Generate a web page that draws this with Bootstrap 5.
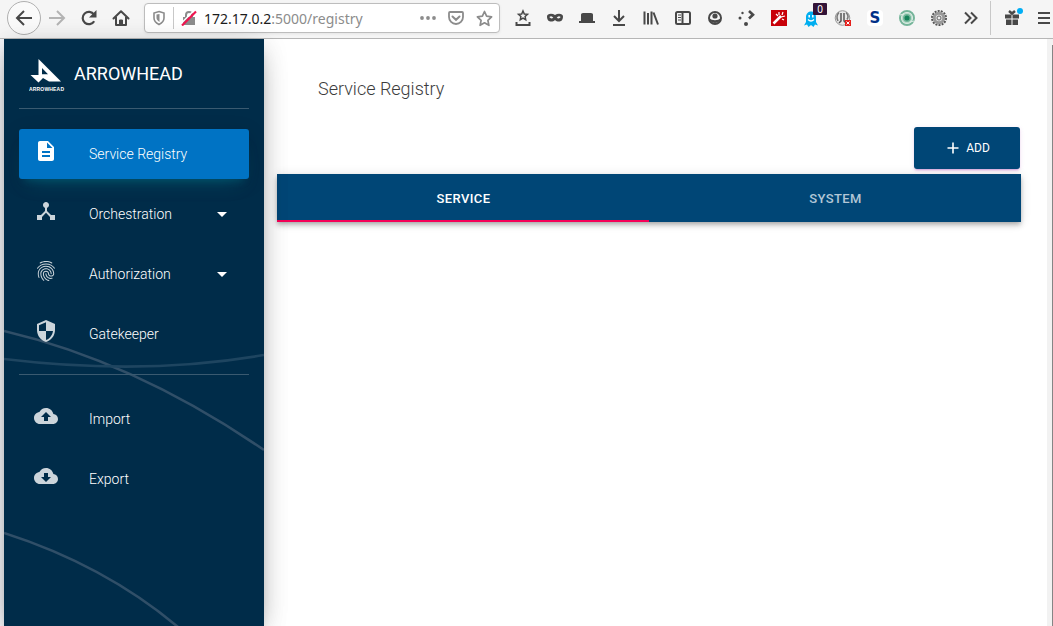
<!DOCTYPE html>
<html lang="en">
<head>
<meta charset="utf-8">
<meta name="viewport" content="width=device-width, initial-scale=1">
<title>Service Registry</title>
<link href="https://cdn.jsdelivr.net/npm/bootstrap@5.3.0/dist/css/bootstrap.min.css" rel="stylesheet">
<style>
  body { height: 626px; font-family: Roboto, sans-serif; background: #fff; }
  .browser-bar { height: 39px; background: #f5f5f5; border-bottom: 1px solid #b6b6b6; padding: 0 0 2px 8px; color: #484848; }
  .tool { width: 32px; height: 34px; flex: none; display: flex; align-items: center; justify-content: center; position: relative; }
  .tool svg, .address svg { display: block; fill: none; stroke: currentColor; stroke-width: 2; flex: none; }
  .back-ring { width: 34px; height: 34px; margin: 0 -1px; border: 1px solid #b0b0b0; border-radius: 50%; background: #fafafa; }
  .address { width: 356px; flex: none; height: 30px; margin: 0 7px; background: #fff; border: 1px solid #bdbdbd; border-radius: 4px; font: 14px "Noto Sans", sans-serif; color: #8c8c8c; padding: 0 6px 0 7px; box-shadow: 0 1px 3px #0001; }
  .address b { font-weight: 400; color: #1c1c1c; }
  .sep { width: 1px; flex: none; background: #c8c8c8; }
  .count { position: absolute; right: 0; top: 2px; width: 14px; height: 12px; background: #321337; color: #fff; font: 10px/12px "Noto Sans", sans-serif; text-align: center; border-radius: 1px; }
  .edge { width: 4px; background: #f3f4f8; flex: none; }
  .side { width: 260px; flex: none; background: #002c49; color: #fff; padding: 0 15px; position: relative; z-index: 2; box-shadow: 0 10px 30px -12px rgba(0,0,0,.42), 0 4px 25px 0 rgba(0,0,0,.12), 0 8px 10px -5px rgba(0,0,0,.2); }
  .arcs { position: absolute; left: 0; top: 0; z-index: -1; }
  .brand { height: 70px; border-bottom: 1px solid #3a5a70; font-size: 18px; }
  .entry { height: 50px; padding: 0 22px 0 15px; border-radius: 3px; font-size: 14px; font-weight: 300; color: #fff; text-decoration: none; }
  .entry svg { width: 24px; height: 24px; margin: 0 31px 6px 0; fill: #ccd5db; }
  .entry.on { background: #0073c4; box-shadow: 0 12px 20px -10px rgba(0,172,193,.28), 0 4px 20px 0 rgba(0,0,0,.12), 0 7px 8px -5px rgba(0,172,193,.2); }
  .entry.on svg { fill: #fff; }
  .tri { border: 5px solid transparent; border-top-color: #fff; border-bottom: 0; }
  .rule { height: 1px; background: #3a5a70; }
  .content { padding: 38px 26px 0 13px; }
  .heading { font-size: 18px; line-height: 24px; font-weight: 300; color: #3c3c3c; padding-left: 41px; margin: 0 0 26px; }
  .btn.add { width: 106px; height: 42px; margin: 0 1px 5px 0; background: #004676; border: 0; border-radius: 3px; color: #fff; font-size: 12px; padding: 0; box-shadow: 0 2px 2px rgba(156,39,176,.14), 0 3px 1px -2px rgba(156,39,176,.2), 0 1px 5px rgba(156,39,176,.12); }
  .tabs { height: 48px; background: #004676; box-shadow: 0 2px 4px -1px rgba(0,0,0,.2), 0 4px 5px rgba(0,0,0,.14), 0 1px 10px rgba(0,0,0,.12); font-size: 13px; font-weight: 500; letter-spacing: .37px; }
  .tabs button { border: 0; background: none; color: #b2c7d6; letter-spacing: inherit; font-weight: 500; padding: 3px 0 0 1px; border-bottom: 2px solid transparent; }
  .tabs button.on { color: #fff; border-color: #f50057; }
  .track { width: 6px; flex: none; background: #f2f2f2; padding: 6px 0 0 5px; }
  .thumb { width: 1px; height: 100%; background: #858585; }
</style>
</head>
<body class="d-flex flex-column overflow-hidden">
<header class="browser-bar d-flex align-items-center">
  <div class="tool back-ring"><svg width="18" height="18"><path d="M17 9H2M9 2L2 9l7 7"/></svg></div>
  <div class="tool" style="margin-left:1px;color:#b3b3b3"><svg width="18" height="18"><path d="M1 9h15M9 2l7 7-7 7"/></svg></div>
  <div class="tool"><svg width="18" height="18"><path d="M14.200 12.200A6.200 6.200 0 1 1 14 5.500" stroke-width="2.200"/><path d="M16.500 1v7.500H9z" fill="currentColor" stroke="none"/></svg></div>
  <div class="tool"><svg width="18" height="18"><path d="M1.500 9.500L9 2.200l7.500 7.300M4 8v8h10V8" stroke-linejoin="round" stroke-linecap="round"/><path d="M7.500 16v-5h3v5z" fill="currentColor" stroke-width="1"/></svg></div>
  <div class="address d-flex align-items-center">
    <svg width="14" height="16" style="stroke-width:1.600"><path d="M7 1.500l5 1.500v5c0 3-2 5-5 6.500C4 13 2 11 2 8V3z"/><path d="M7.500 4v8C5.500 10.500 4.500 9.300 4.500 8V4.600z" fill="currentColor" stroke="none"/></svg>
    <i class="sep" style="height:22px;margin:0 7px"></i>
    <svg width="16" height="16"><path d="M5 8V5a3 3 0 0 1 6 0v3"/><path d="M2 7h12v8H2z" fill="currentColor" stroke="none"/><path d="M-.5 14L13.500 0" stroke="#fff" stroke-width="1.500"/><path d="M1 15.500L15 1.500" stroke="#f0144f" stroke-width="2.200"/></svg>
    <span class="flex-fill" style="padding-left:7px"><b>172.17.0.2</b>:5000/registry</span>
    <svg width="16" height="16"><g fill="currentColor" stroke="none"><circle cx="2" cy="8" r="1.900"/><circle cx="8" cy="8" r="1.900"/><circle cx="14" cy="8" r="1.900"/></g></svg>
    <svg width="16" height="16" style="margin:0 12px"><path d="M2 2h12q1 0 1 1v4a7 7 0 0 1-14 0V3q0-1 1-1z" stroke-width="1.800"/><path d="M4.500 6.500L8 9.800l3.500-3.300" stroke-linecap="round"/></svg>
    <svg width="17" height="17"><path d="M8.500 1.500l2.100 4.700 5 .6-3.700 3.500 1 5-4.400-2.500-4.400 2.500 1-5L1.400 6.800l5-.6z" stroke-width="1.700" stroke-linejoin="round"/></svg>
  </div>
  <div class="tool"><svg width="16" height="18"><path d="M8 2l1.300 3 3.200.3-2.400 2.200.6 3.200L8 9.100l-2.700 1.600.6-3.200-2.400-2.200L6.700 5z" stroke-width="1.500"/><path d="M1.500 13v3h13v-3"/></svg></div>
  <div class="tool"><svg width="18" height="12"><path d="M1 4.500C1 1.500 6 1 9 3c3-2 8-1.500 8 1.500 0 6-5.500 6-8 3.500-2.500 2.500-8 2.500-8-3.500z" fill="currentColor" stroke="none"/><path d="M3.300 5q2.200-2 4 .7Q5 7.500 3.300 5zM14.700 5q-2.200-2-4 .7Q13 7.500 14.700 5z" fill="#f5f5f5" stroke="none"/></svg></div>
  <div class="tool"><svg width="16" height="12"><path d="M2 9V2.500Q2 1 4 1h8q2 0 2 1.500V9h2v2H0V9z" fill="currentColor" stroke="none"/></svg></div>
  <div class="tool"><svg width="16" height="18"><path d="M8 1v11M3 7l5 5 5-5M2 16h12"/></svg></div>
  <div class="tool"><svg width="16" height="16"><path d="M1.500 1.500v13M5 3v11.500M8.500 1.500v13M10.500 2.500l4.500 12"/></svg></div>
  <div class="tool"><svg width="18" height="16"><rect x="2" y="2" width="14" height="12" rx="1.500"/><path d="M8.500 2v12"/><path d="M4 5h3M4 7.500h3M4 10h3" stroke-width="1"/></svg></div>
  <div class="tool"><svg width="16" height="16"><circle cx="8" cy="8" r="6"/><circle cx="8" cy="6" r="2.600" fill="currentColor" stroke="none"/><path d="M2.500 8.500q2 1.700 5.500 1.700t5.500-1.700l-.5 2.500q-5 4-10 0z" fill="currentColor" stroke="none"/></svg></div>
  <div class="tool"><svg width="18" height="18"><g fill="currentColor" stroke="none"><circle cx="4.500" cy="4" r="1.200"/><circle cx="2" cy="9" r="1.500"/><circle cx="8" cy="15" r="2"/></g><path d="M11 2l4 3.700-4 3.800" stroke-width="2.600"/></svg></div>
  <div class="tool"><svg width="16" height="16"><path d="M0 0h16v16H0z" fill="#c80008" stroke="none"/><path d="M2.500 13.500L10 6" stroke="#fff" stroke-width="2.500"/><path d="M8 2v3M5 4l2 2M12 2l-1 3M14 6l-4 1M11 9l2 1" stroke="#fff" stroke-width="1.200"/></svg></div>
  <div class="tool"><svg width="14" height="16" style="margin-top:1px"><path d="M2 11V6c0-7.500 10-7.500 10 0v5l2 3.500-3-1L9.500 16 7 14l-2.500 2L3 13.500l-3 1z" fill="#00aef0" stroke="none"/><path d="M5.200 4v2.500M8.800 4v2.500" stroke="#fff" stroke-width="1.500"/><path d="M4 8.500q3 3 6 0" stroke="#fff" stroke-width="1.200"/></svg><span class="count">0</span></div>
  <div class="tool"><svg width="18" height="18"><circle cx="8.500" cy="9" r="7.300" fill="#e8e8e8" stroke="#999" stroke-width="1"/><path d="M7 4v8l-2 2M10 4v8l2 2" stroke="#555" stroke-width="1.500"/><path d="M5 3.500Q1.500 7 4 12M12 3.500q3.500 3.500 1 7" stroke="#777" stroke-width="1.500"/><path d="M11 11h6v6h-6z" fill="#e4201c" stroke="none"/><path d="M12.500 12.500l3 3m0-3l-3 3" stroke="#fff" stroke-width="1"/></svg></div>
  <div class="tool"><span style="width:16px;height:16px;border-radius:4px;background:#fff;color:#003087;font:bold 15px/16px 'DejaVu Sans',sans-serif;text-align:center">S</span></div>
  <div class="tool"><svg width="18" height="18"><circle cx="9" cy="9" r="7" stroke="#75b59a" stroke-width="2"/><circle cx="9" cy="9" r="4.700" fill="#6fb497" stroke="#b9dccb" stroke-width="1.400"/><circle cx="9" cy="9" r="2.500" fill="#17835b" stroke="none"/><path d="M2 6l4-1M12 13l4-1" stroke="#dcece4" stroke-width="1.200"/></svg></div>
  <div class="tool"><svg width="18" height="18"><circle cx="9" cy="9" r="7" stroke="#555" stroke-dasharray="2 1.140"/><circle cx="9" cy="9" r="4.800" fill="#ddd" stroke="#999" stroke-width="3"/><circle cx="9" cy="9" r="2" fill="#eee" stroke="#666" stroke-width="1"/></svg></div>
  <div class="tool"><svg width="16" height="14"><path d="M2 1.500L7.500 7 2 12.500M8 1.500L13.500 7 8 12.500"/></svg></div>
  <i class="sep" style="height:34px;margin:0 6px 0 3px"></i>
  <div class="tool"><svg width="20" height="20" style="margin:-2px 0 0 2px"><path d="M1 7.500h6.500v4H1zM8.500 7.500H15v4H8.500zM2 12.500h5.500V18H2zM8.500 12.500H14V18H8.500z" fill="currentColor" stroke="none"/><path d="M5 4l3 2.500L11 4" stroke-width="2.500"/><circle cx="16" cy="4" r="3" fill="#00aef5" stroke="none"/></svg></div>
  <div class="tool" style="margin-left:-1px"><svg width="12" height="14"><path d="M0 2h12M0 7h12M0 12h12"/></svg></div>
</header>

<div class="d-flex flex-fill" style="min-height:0">
  <div class="edge"></div>
  <nav class="side">
    <svg class="arcs" width="260" height="587" fill="none" stroke="#304f68" stroke-width="2.600"><path d="M0 292C98 315 184 359 260 411"/><path d="M0 320Q140 337 260 316" stroke="#1e4560"/><path d="M0 494Q100 526 174 588"/></svg>
    <div class="brand d-flex align-items-center">
      <svg width="36" height="34" viewBox="0 0 36 34" style="margin:4px 9px 0 10px"><path fill-rule="evenodd" d="M9.500 0L32 22.500H20l-6-3.500-4.500 4.500L1.500 16h8zM13 9v6.300h6z" fill="#fff"/><text x="0" y="31.500" textLength="35" font-family="Liberation Sans, sans-serif" font-size="5" font-weight="700" fill="#fff">ARROWHEAD</text></svg>
      <span>ARROWHEAD</span>
    </div>
    <div class="d-flex flex-column" style="gap:10px;padding:20px 0 15px">
      <a class="entry on d-flex align-items-center"><svg viewBox="0 0 24 24"><path d="M14 2H6c-1.100 0-1.990.9-1.990 2L4 20c0 1.100.89 2 1.990 2H18c1.100 0 2-.9 2-2V8l-6-6zm2 16H8v-2h8v2zm0-4H8v-2h8v2zm-3-5V3.500L18.500 9H13z"/></svg>Service Registry</a>
      <a class="entry d-flex align-items-center"><svg viewBox="0 0 24 24"><path d="M17 16l-4-4V8.820C14.160 8.400 15 7.300 15 6c0-1.660-1.340-3-3-3S9 4.340 9 6c0 1.300.84 2.400 2 2.820V12l-4 4H3v5h5v-3.050l4-4.200 4 4.200V21h5v-5h-4z"/></svg>Orchestration<i class="tri ms-auto"></i></a>
      <a class="entry d-flex align-items-center"><svg viewBox="0 0 24 24"><path d="M17.810 4.470c-.08 0-.16-.02-.23-.06C15.660 3.420 14 3 12.010 3c-1.980 0-3.860.47-5.570 1.410-.24.13-.54.04-.68-.2-.13-.24-.04-.55.2-.68C7.820 2.520 9.860 2 12.010 2c2.130 0 3.990.47 6.030 1.520.25.13.34.43.21.67-.09.18-.26.28-.44.28zM3.500 9.720c-.1 0-.2-.03-.29-.09-.23-.16-.28-.47-.12-.7.99-1.400 2.250-2.500 3.750-3.270C9.980 4.040 14 4.030 17.150 5.650c1.500.77 2.760 1.860 3.750 3.250.16.22.11.54-.12.7-.23.16-.54.11-.7-.12-.9-1.260-2.040-2.250-3.390-2.940-2.870-1.470-6.540-1.470-9.400.01-1.360.7-2.500 1.700-3.400 2.960-.08.14-.23.21-.39.21zm6.250 12.070c-.13 0-.26-.05-.35-.15-.87-.87-1.340-1.430-2.010-2.640-.69-1.230-1.050-2.730-1.050-4.340 0-2.970 2.540-5.390 5.660-5.390s5.660 2.420 5.660 5.390c0 .28-.22.5-.5.5s-.5-.22-.5-.5c0-2.420-2.090-4.390-4.660-4.390-2.570 0-4.660 1.970-4.660 4.390 0 1.440.32 2.770.93 3.850.64 1.150 1.080 1.640 1.850 2.420.19.2.19.51 0 .71-.11.1-.24.15-.37.15zm7.170-1.850c-1.190 0-2.240-.3-3.100-.89-1.490-1.010-2.380-2.650-2.380-4.390 0-.28.22-.5.5-.5s.5.22.5.5c0 1.410.72 2.740 1.940 3.560.71.48 1.540.71 2.540.71.24 0 .64-.03 1.040-.1.27-.05.53.13.58.41.05.27-.13.53-.41.58-.57.11-1.070.12-1.210.12zM14.910 22c-.04 0-.09-.01-.13-.02-1.590-.44-2.630-1.030-3.720-2.100-1.400-1.390-2.170-3.240-2.170-5.220 0-1.620 1.380-2.940 3.080-2.940 1.700 0 3.080 1.320 3.080 2.940 0 1.070.93 1.940 2.080 1.940s2.080-.87 2.080-1.940c0-3.770-3.250-6.830-7.250-6.830-2.840 0-5.440 1.580-6.610 4.030-.39.81-.59 1.760-.59 2.800 0 .78.07 2.010.67 3.610.1.26-.03.55-.29.64-.26.1-.55-.04-.64-.29-.49-1.310-.73-2.610-.73-3.960 0-1.200.23-2.290.68-3.240 1.330-2.790 4.280-4.600 7.510-4.600 4.550 0 8.250 3.510 8.250 7.830 0 1.620-1.380 2.940-3.080 2.940s-3.080-1.320-3.080-2.940c0-1.070-.93-1.940-2.080-1.940s-2.080.87-2.080 1.940c0 1.710.66 3.310 1.870 4.510.95.94 1.860 1.460 3.270 1.850.27.07.42.35.35.61-.05.23-.26.38-.47.38z"/></svg>Authorization<i class="tri ms-auto"></i></a>
      <a class="entry d-flex align-items-center"><svg viewBox="0 0 24 24"><path d="M12 1L3 5v6c0 5.550 3.840 10.740 9 12 5.160-1.260 9-6.450 9-12V5l-9-4zm0 10.990h7c-.53 4.120-3.280 7.790-7 8.940V12H5V6.300l7-3.110v8.800z"/></svg>Gatekeeper</a>
    </div>
    <div class="rule"></div>
    <div class="d-flex flex-column" style="gap:10px;padding-top:19px">
      <a class="entry d-flex align-items-center"><svg viewBox="0 0 24 24"><path d="M19.350 10.040C18.670 6.590 15.640 4 12 4 9.110 4 6.600 5.640 5.350 8.040 2.340 8.360 0 10.910 0 14c0 3.310 2.690 6 6 6h13c2.760 0 5-2.240 5-5 0-2.640-2.050-4.780-4.650-4.960zM14 13v4h-4v-4H7l5-5 5 5h-3z"/></svg>Import</a>
      <a class="entry d-flex align-items-center"><svg viewBox="0 0 24 24"><path d="M19.350 10.040C18.670 6.590 15.640 4 12 4 9.110 4 6.600 5.640 5.350 8.040 2.340 8.360 0 10.910 0 14c0 3.310 2.690 6 6 6h13c2.760 0 5-2.240 5-5 0-2.640-2.050-4.780-4.650-4.960zM17 13l-5 5-5-5h3V9h4v4h3z"/></svg>Export</a>
    </div>
  </nav>
  <main class="content flex-fill d-flex flex-column">
    <h1 class="heading">Service Registry</h1>
    <button class="btn add d-flex align-items-center justify-content-center align-self-end"><svg width="12" height="12" fill="none" stroke="#fff" stroke-width="1.600" style="margin:0 7px 0 3px"><path d="M6 .5v11M.5 6h11"/></svg>ADD</button>
    <div class="tabs d-flex"><button class="flex-fill w-50 on">SERVICE</button><button class="flex-fill w-50">SYSTEM</button></div>
  </main>
  <div class="track"><div class="thumb"></div></div>
</div>
<script src="https://cdn.jsdelivr.net/npm/bootstrap@5.3.0/dist/js/bootstrap.bundle.min.js"></script>
</body>
</html>
